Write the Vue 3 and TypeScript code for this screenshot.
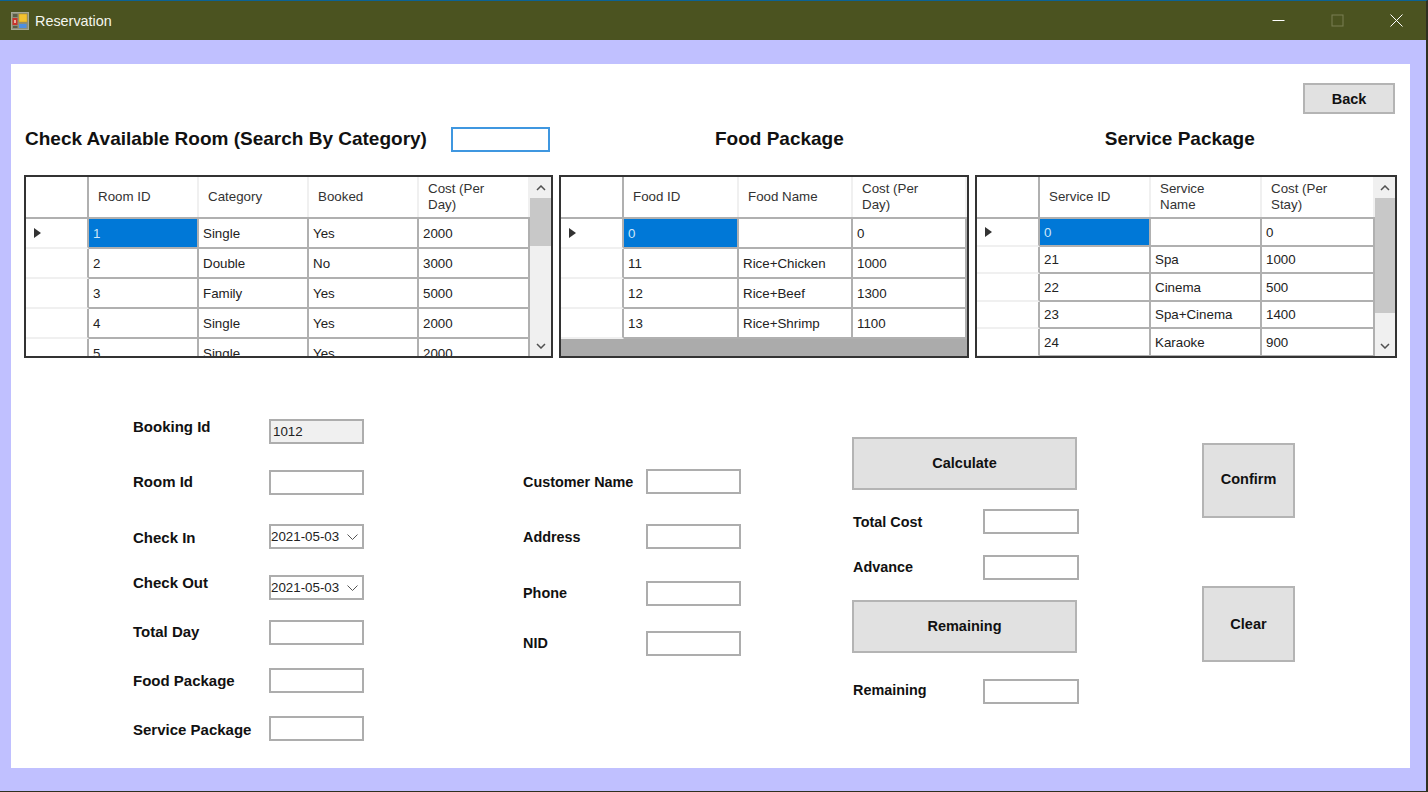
<template>
  <div class="window">
    <div class="titlebar">
      <svg class="app-icon" width="18" height="18" viewBox="0 0 18 18">
        <rect x="0.5" y="0.5" width="17" height="17" fill="#8d8f78" stroke="#a6a896" />
        <rect x="8" y="2" width="8" height="8" fill="#f2c230" stroke="#b98f1c" stroke-width="0.5" />
        <rect x="1.5" y="6" width="5" height="7" fill="#c8342c" />
        <rect x="3" y="8" width="2" height="3" fill="#e8b0a0" />
        <rect x="8" y="12" width="7.5" height="4" fill="#4f8fe0" />
        <rect x="2" y="2" width="4.5" height="3" fill="#5c5e48" />
        <rect x="2" y="14" width="4.5" height="2" fill="#5c5e48" />
      </svg>
      <span class="title">Reservation</span>
      <div class="win-btns">
        <svg width="13" height="13" viewBox="0 0 13 13"><path d="M0.5 6.5H12.5" stroke="#fff" stroke-width="1" /></svg>
        <svg width="13" height="13" viewBox="0 0 13 13"><rect x="1" y="1" width="11" height="11" fill="none" stroke="#7a7f52" /></svg>
        <svg width="13" height="13" viewBox="0 0 13 13"><path d="M0.5 0.5L12.5 12.5M12.5 0.5L0.5 12.5" stroke="#fff" stroke-width="1" /></svg>
      </div>
    </div>

    <div class="client">
      <div class="form">
        <div class="top-row">
          <button class="btn btn-back">Back</button>
        </div>

        <div class="heading-row">
          <h2 class="heading room-heading">Check Available Room (Search By Category)</h2>
          <div class="field search"></div>
          <h2 class="heading food-heading">Food Package</h2>
          <h2 class="heading service-heading">Service Package</h2>
        </div>

        <div class="grids">
          <div v-for="g in grids" :key="g.id" class="grid" :class="g.id">
            <div class="grid-body">
              <div class="grid-head" :style="{ gridTemplateColumns: g.cols }">
                <div class="corner"></div>
                <div v-for="h in g.head" :key="h" class="head-cell">{{ h }}</div>
              </div>
              <div
                v-for="(r, i) in g.rows"
                :key="i"
                class="grid-row"
                :style="{ gridTemplateColumns: g.cols, height: g.rowH[i] + 'px' }"
              >
                <div class="row-head">
                  <span v-if="i === 0" class="marker"></span>
                </div>
                <div
                  v-for="(c, j) in r"
                  :key="j"
                  class="cell"
                  :class="{ selected: i === 0 && j === 0 }"
                >{{ c }}</div>
              </div>
            </div>
            <div v-if="g.thumb" class="scrollbar">
              <svg class="arrow" width="10" height="6" viewBox="0 0 10 6"><path d="M1 5L5 1L9 5" fill="none" stroke="#505050" stroke-width="1.5" /></svg>
              <div class="track">
                <div class="thumb" :style="{ height: g.thumb + 'px' }"></div>
              </div>
              <svg class="arrow" width="10" height="6" viewBox="0 0 10 6"><path d="M1 1L5 5L9 1" fill="none" stroke="#505050" stroke-width="1.5" /></svg>
            </div>
          </div>
        </div>

        <div class="lower">
          <div class="col col-booking">
            <div v-for="f in bookingFields" :key="f.label" class="row" :style="{ marginTop: f.top + 'px' }">
              <label class="lbl" :style="{ marginTop: f.shift + 'px' }">{{ f.label }}</label>
              <div v-if="f.date" class="field date">
                <span>{{ f.date }}</span>
                <svg width="11" height="6" viewBox="0 0 11 6"><path d="M0.5 0.5L5.5 5.5L10.5 0.5" fill="none" stroke="#555" /></svg>
              </div>
              <input v-else class="field" :class="{ readonly: f.value }" type="text" :value="f.value" :readonly="!!f.value" />
            </div>
          </div>

          <div class="col col-customer">
            <div v-for="f in customerFields" :key="f.label" class="row" :style="{ marginTop: f.top + 'px' }">
              <label class="lbl" :style="{ marginTop: f.shift + 'px' }">{{ f.label }}</label>
              <input class="field" type="text" />
            </div>
          </div>

          <div class="col col-cost">
            <button class="btn btn-wide">Calculate</button>
            <div class="row row-a">
              <label class="lbl">Total Cost</label>
              <input class="field" type="text" />
            </div>
            <div class="row row-b">
              <label class="lbl">Advance</label>
              <input class="field" type="text" />
            </div>
            <button class="btn btn-wide btn-remaining">Remaining</button>
            <div class="row row-c">
              <label class="lbl">Remaining</label>
              <input class="field" type="text" />
            </div>
          </div>

          <div class="col col-actions">
            <button class="btn btn-confirm">Confirm</button>
            <button class="btn btn-clear">Clear</button>
          </div>
        </div>
      </div>
    </div>
  </div>
</template>

<script setup lang="ts">
interface GridDef {
  id: string
  cols: string
  head: string[]
  rows: string[][]
  rowH: number[]
  thumb: number
}

const grids: GridDef[] = [
  {
    id: 'rooms',
    cols: '63px 110px 110px 110px 111px',
    head: ['Room ID', 'Category', 'Booked', 'Cost (Per Day)'],
    rows: [
      ['1', 'Single', 'Yes', '2000'],
      ['2', 'Double', 'No', '3000'],
      ['3', 'Family', 'Yes', '5000'],
      ['4', 'Single', 'Yes', '2000'],
      ['5', 'Single', 'Yes', '2000'],
    ],
    rowH: [30, 30, 30, 30, 30],
    thumb: 48,
  },
  {
    id: 'food',
    cols: '63px 115px 114px 114px',
    head: ['Food ID', 'Food Name', 'Cost (Per Day)'],
    rows: [
      ['0', '', '0'],
      ['11', 'Rice+Chicken', '1000'],
      ['12', 'Rice+Beef', '1300'],
      ['13', 'Rice+Shrimp', '1100'],
    ],
    rowH: [30, 30, 30, 30],
    thumb: 0,
  },
  {
    id: 'services',
    cols: '63px 111px 111px 113px',
    head: ['Service ID', 'Service Name', 'Cost (Per Stay)'],
    rows: [
      ['0', '', '0'],
      ['21', 'Spa', '1000'],
      ['22', 'Cinema', '500'],
      ['23', 'Spa+Cinema', '1400'],
      ['24', 'Karaoke', '900'],
      ['', '', ''],
    ],
    rowH: [28, 27, 28, 27, 28, 28],
    thumb: 115,
  },
]

interface FieldDef {
  label: string
  top: number
  shift: number
  value?: string
  date?: string
}

const bookingFields: FieldDef[] = [
  { label: 'Booking Id', top: 0, shift: -5, value: '1012' },
  { label: 'Room Id', top: 26, shift: -1 },
  { label: 'Check In', top: 29, shift: 1, date: '2021-05-03' },
  { label: 'Check Out', top: 26, shift: -5, date: '2021-05-03' },
  { label: 'Total Day', top: 20, shift: -1 },
  { label: 'Food Package', top: 23, shift: 0 },
  { label: 'Service Package', top: 23, shift: 1 },
]

const customerFields: FieldDef[] = [
  { label: 'Customer Name', top: 0, shift: 1 },
  { label: 'Address', top: 30, shift: 1 },
  { label: 'Phone', top: 32, shift: 0 },
  { label: 'NID', top: 25, shift: 0 },
]
</script>

<style scoped>
.window {
  width: 1428px;
  height: 792px;
  box-sizing: border-box;
  display: flex;
  flex-direction: column;
  background: #c0c0ff;
  border-top: 1px solid #0b6394;
  border-right: 2px solid #2f3020;
  border-bottom: 1px solid #2f3020;
  font-family: "Liberation Sans", Arial, sans-serif;
  color: #111;
}

.titlebar {
  height: 39px;
  flex: none;
  display: flex;
  align-items: center;
  background: #4b5320;
  padding-left: 11px;
}

.app-icon {
  flex: none;
}

.title {
  margin-left: 6px;
  color: #f4f6ee;
  font-size: 14.4px;
}

.win-btns {
  margin-left: auto;
  display: flex;
  align-items: center;
  gap: 46px;
  padding-right: 23px;
}

.client {
  flex: 1;
  padding: 24px 16px 23px 11px;
  min-height: 0;
  display: flex;
}

.form {
  flex: 1;
  background: #fff;
  display: flex;
  flex-direction: column;
}

.top-row {
  display: flex;
  justify-content: flex-end;
  padding: 19px 15px 0 0;
}

.btn {
  box-sizing: border-box;
  padding: 0;
  border: 2px solid #b4b4b4;
  background: #e1e1e1;
  color: #111;
  font-family: inherit;
  font-size: 14.5px;
  font-weight: 700;
}

.btn-back {
  width: 92px;
  height: 31px;
}

.heading-row {
  height: 50px;
  display: flex;
  align-items: center;
  padding-left: 14px;
}

.heading {
  margin: 0;
  font-size: 19px;
  font-weight: 700;
  white-space: nowrap;
}

.food-heading {
  margin-left: 165px;
}

.service-heading {
  margin-left: 261px;
}

.grids {
  display: flex;
  padding-left: 13px;
  gap: 6px;
  margin-top: 11px;
}

.grid {
  box-sizing: border-box;
  height: 183px;
  border: 2px solid #333;
  display: flex;
  background: #fff;
  overflow: hidden;
}

.grid.rooms {
  width: 529px;
}

.grid.food {
  width: 410px;
  background: #ababab;
}

.grid.services {
  width: 422px;
}

.grid-body {
  overflow: hidden;
  flex: none;
}

.grid-head {
  display: grid;
  height: 42px;
  background: #fff;
  border-bottom: 2px solid #b0b0b0;
  box-sizing: border-box;
}

.corner {
  border-right: 2px solid #b0b0b0;
}

.head-cell {
  display: flex;
  align-items: center;
  box-sizing: border-box;
  padding: 0 18px 0 9px;
  font-size: 13.33px;
  line-height: 16px;
  color: #333;
  border-right: 2px solid #f0f0f0;
}

.grid-row {
  display: grid;
  box-sizing: border-box;
  background: #fff;
}

.row-head {
  box-sizing: border-box;
  display: flex;
  align-items: center;
  padding-left: 8px;
  border-right: 2px solid #b0b0b0;
  border-bottom: 2px solid #f0f0f0;
}

.marker {
  width: 0;
  height: 0;
  border-left: 7px solid #333;
  border-top: 5px solid transparent;
  border-bottom: 5px solid transparent;
}

.cell {
  box-sizing: border-box;
  display: flex;
  align-items: center;
  padding-left: 4px;
  font-size: 13.33px;
  color: #222;
  white-space: nowrap;
  border-right: 2px solid #b0b0b0;
  border-bottom: 2px solid #b0b0b0;
}

.cell.selected {
  background: #0078d7;
  color: #cfe6f8;
}

.scrollbar {
  flex: 1;
  display: flex;
  flex-direction: column;
  align-items: center;
  background: #f0f0f0;
}

.arrow {
  flex: none;
  margin: 7px 0;
}

.arrow:first-child {
  margin-top: 8px;
}

.track {
  flex: 1;
  align-self: stretch;
}

.thumb {
  background: #c8c8c8;
}

.lower {
  flex: 1;
  display: flex;
  padding-top: 61px;
}

.col {
  display: flex;
  flex-direction: column;
  flex: none;
}

.row {
  display: flex;
  flex: none;
  height: 25px;
}

.lbl {
  display: block;
  flex: none;
  font-size: 14.4px;
  line-height: 25px;
  font-weight: 700;
}

.field {
  box-sizing: border-box;
  flex: none;
  width: 95px;
  height: 25px;
  margin: 0;
  padding: 0 4px;
  border: 2px solid #adadad;
  border-radius: 0;
  background: #fff;
  font-family: inherit;
  font-size: 13.33px;
  color: #222;
  outline: none;
}

.field.search {
  width: 99px;
  margin-left: 24px;
  border: 2px solid #3f97e0;
}

.field.readonly {
  background: #f0f0f0;
  padding-left: 2px;
}

.field.date {
  display: flex;
  align-items: center;
  justify-content: space-between;
  padding: 0 4px 0 0;
  white-space: nowrap;
}

.col-booking {
  width: 232px;
  margin-left: 121px;
}

.col-booking .lbl {
  width: 136px;
  padding-left: 1px;
  font-size: 15px;
}

.col-customer {
  margin-left: 159px;
  padding-top: 50px;
}

.col-customer .lbl {
  width: 123px;
}

.col-cost {
  margin-left: 111px;
  width: 227px;
  padding-top: 18px;
}

.btn-wide {
  width: 225px;
  height: 53px;
  padding-bottom: 2px;
}

.col-cost .lbl {
  width: 130px;
  padding-left: 1px;
}

.col-cost .field {
  width: 96px;
}

.row-a {
  margin-top: 19px;
}

.row-a .lbl {
  line-height: 27px;
}

.row-b {
  margin-top: 21px;
}

.btn-remaining {
  margin-top: 20px;
}

.row-c {
  margin-top: 26px;
}

.row-c .lbl {
  line-height: 23px;
}

.col-actions {
  margin-left: 123px;
  padding-top: 24px;
}

.btn-confirm {
  width: 93px;
  height: 75px;
  padding-bottom: 3px;
}

.btn-clear {
  width: 93px;
  height: 76px;
  margin-top: 68px;
}
</style>

<style>
html,
body {
  margin: 0;
  overflow: hidden;
}
</style>
